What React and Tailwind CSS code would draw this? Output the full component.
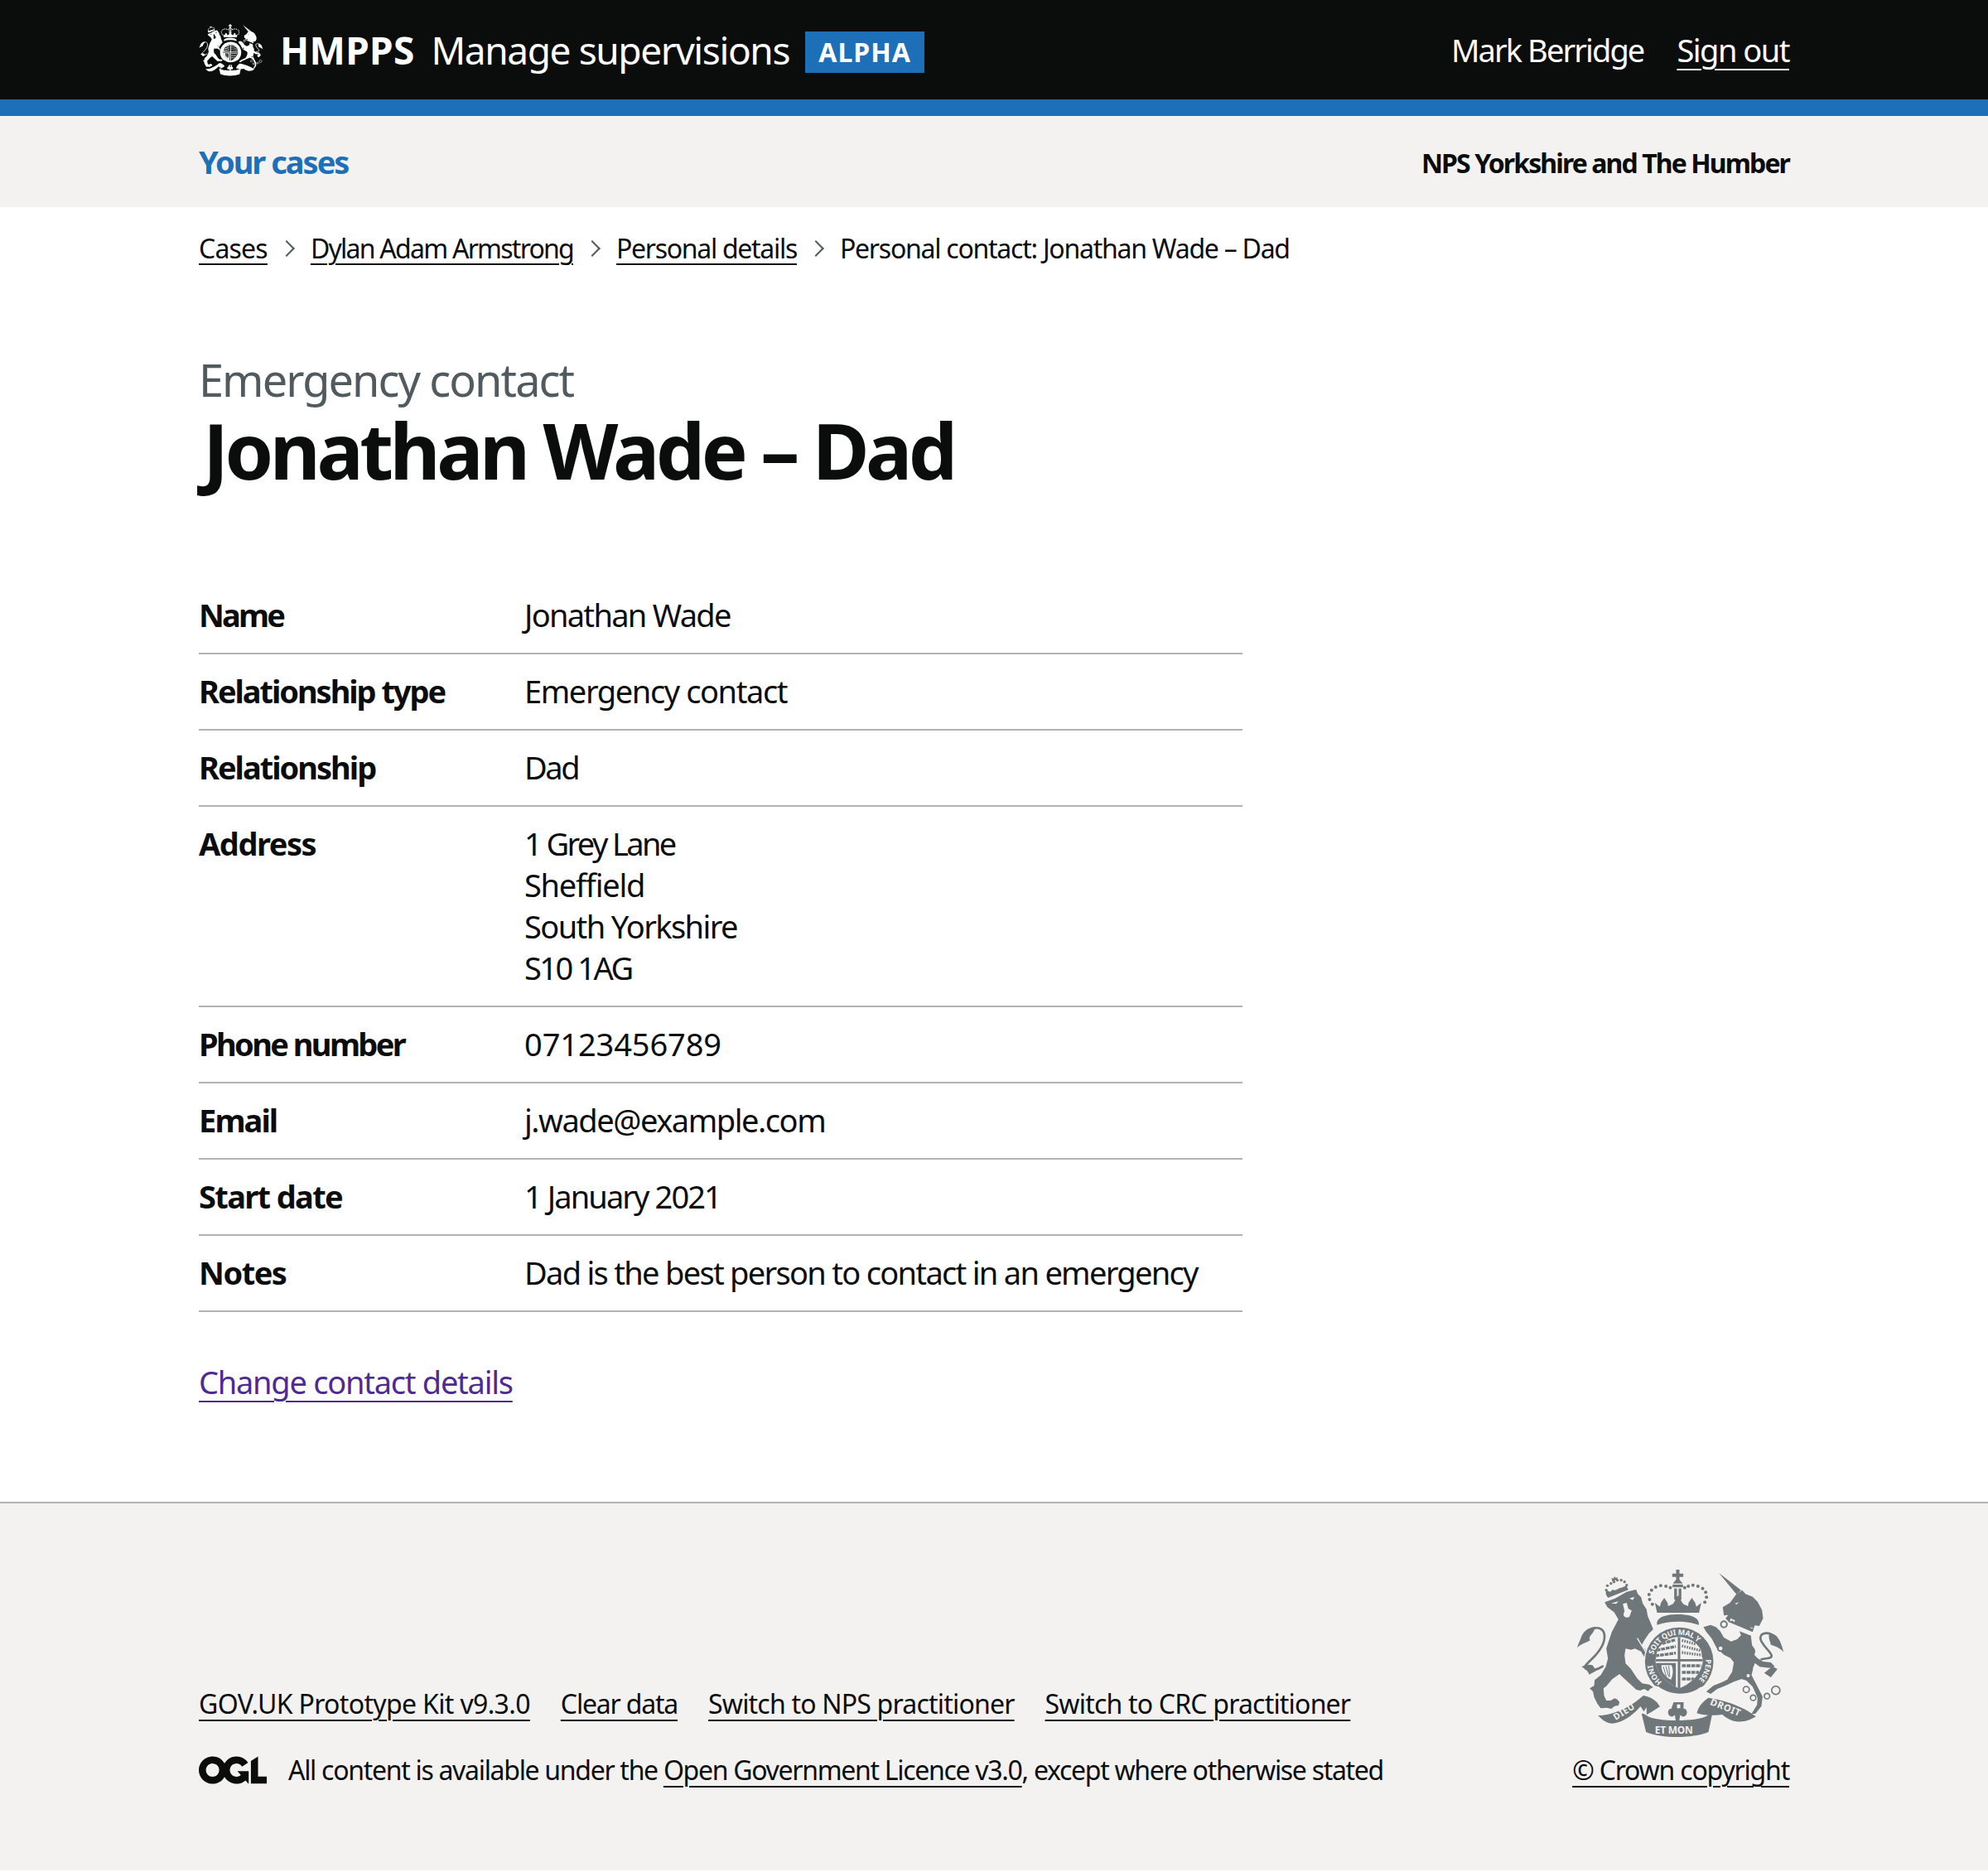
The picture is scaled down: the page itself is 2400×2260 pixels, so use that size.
import React from "react";

const rows = [
  { label: "Name", labelClass: "tracking-[-2.8px]", lines: [["Jonathan Wade", "tracking-[-1.7px]"]] },
  { label: "Relationship type", labelClass: "tracking-[-2.05px]", lines: [["Emergency contact", "tracking-[-1.4px]"]] },
  { label: "Relationship", labelClass: "tracking-[-2px]", lines: [["Dad", "tracking-[-2.4px]"]] },
  {
    label: "Address",
    labelClass: "tracking-[-1.45px]",
    lines: [
      ["1 Grey Lane", "tracking-[-2.6px]"],
      ["Sheffield", "tracking-[-1.25px]"],
      ["South Yorkshire", "tracking-[-1.6px]"],
      ["S10 1AG", "tracking-[-2.5px]"],
    ],
  },
  { label: "Phone number", labelClass: "tracking-[-2.6px]", lines: [["07123456789", "tracking-[-0.1px]"]] },
  { label: "Email", labelClass: "tracking-[-1.9px]", lines: [["j.wade@example.com", "tracking-[-1.45px]"]] },
  { label: "Start date", labelClass: "tracking-[-1.65px]", lines: [["1 January 2021", "tracking-[-1.9px]"]] },
  { label: "Notes", labelClass: "tracking-[-1.5px]", lines: [["Dad is the best person to contact in an emergency", "tracking-[-1.7px]"]] },
];

const dots = [
  [345, 175], [335, 158], [333, 140], [342, 124], [357, 113], [375, 108], [394, 110], [410, 115],
  [541, 150], [538, 132], [527, 118], [510, 110], [492, 106], [475, 110], [462, 115], [535, 168],
];
const lionDots = [[178, 124], [182, 108], [195, 100], [206, 94], [218, 88], [232, 88], [244, 94], [252, 106], [252, 120]];

// royal arms, coordinates taken from the footer crop
const Crest = ({ fg, bg, width, height, label, id }) => (
  <svg viewBox="70 50 755 612" width={width} height={height} className="block shrink-0">
    {/* crown */}
    <path fill={fg} d="M431 50h12v14h14v12h-14v10l12 14h-36l12-14V76h-14V64h14z" />
    <path fill={fg} d="M424 118h10v40h-10zM440 118h10v40h-10zM418 104h38v10h-38z" />
    {dots.map(([x, y]) => <circle key={x + "-" + y} cx={x} cy={y} r="6" fill={fg} />)}
    <path fill={fg} d="M362 206l-8-36 18 14 4-14 12-18 12 18 2 12 18-8 8-14-2-6 12-10 12 10-2 6 8 14 18 8 2-12 12-18 12 18 4 14 18-14-8 36z" />
    <path fill={fg} d="M362 250c-4-28 30-38 75-38s80 10 76 38c-44-16-107-16-151 0z" />
    {/* lion crown */}
    <path fill={fg} d="M176 134l2-10 14 6 10-8 12 6 12-12 10 6 14-10 4 12-70 28z" />
    <path fill={fg} d="M176 138l76-30 2 8-72 32z" />
    {lionDots.map(([x, y]) => <circle key={x + "_" + y} cx={x} cy={y} r="5" fill={fg} />)}
    <path fill={fg} d="M199 92l-2-12 8 2 2-8 6 6 6-4-2 10z" />
    {/* lion */}
    <path fill={fg} d="M172 168l38-14 42-24 34-8 6 16 12 12 6 22 14 22 4 24 12 28 8 20-16 16-16 24-10 18 24 28 16 6 4 26-8 24-16-12-6-22-16-28-22-10-14 4-20-4-4 24 4 30 18 18 24 36 18 18 26 4 14 10-12 6-6 8-14-8-16 6-14-4-24-22-28-26-8-8-26 18-22 26-10 8 2 26 8 18 16 0 14-8 10 4 8 10-4 12-14 2-12 10-16-4-22 2-12-16-12-24-4-20-12-12 16-10 2-20 22-18 18-30 8-30-6-36 20-60 24-46-16-26-24-18z" />
    <path fill="none" stroke={fg} strokeWidth="8" strokeLinecap="round" d="M165 400c-22 16-50 18-62 8-8-10 12-22 34-46 22-24 38-52 34-78-4-22-30-30-44-16" />
    <path fill={fg} d="M140 256c-22 2-40 12-50 32l-18 44c14-12 34-18 48-26-6-6-2-16 8-26 6-8 8-16 12-24zM88 402c14-8 28-10 40-6l14 20-26 14c-4-14-16-22-28-28z" />
    <path fill={bg} d="M238 174l14-4 6 22 12 6-8 22c-8 6-20 4-22-8l4-12zM196 172l26-8-8 10zM262 154l18-6-6 12z" />
    <path fill="none" stroke={bg} strokeWidth="4" d="M290 298l44 72" />
    {/* unicorn */}
    <path fill={fg} d="M586 62l80 62-16 16z" />
    <path fill={fg} d="M600 186L626 170 648 140 670 124 682 138 708 148 726 166 742 196 746 226 732 254 716 252 702 292 706 324 716 338 722 368 744 382 774 386 788 400 772 406 734 402 716 388 710 408 704 432 724 470 744 510 740 544 718 572 704 572 724 540 726 514 708 474 686 452 668 446 640 456 610 470 580 482 556 500 540 492 566 470 596 458 616 448 634 420 640 386 628 370 604 358 578 334 560 300 540 275 530 258 556 250 575 258 590 272 604 296 630 310 652 302 666 288 652 250 646 234 638 232 624 242 610 226 620 214 604 216z" />
    <path fill={bg} d="M628 226l96 42-10 26-92-36z" />
    <path fill={fg} d="M634 234l8 6 4-10 10 8 6-8 8 14 8-6 8 14 8-6 8 16 10 2-4 12-86-36z" />
    <circle cx="724" cy="356" r="9" fill={bg} />
    <circle cx="718" cy="406" r="8" fill={bg} />
    <circle cx="692" cy="434" r="6" fill={bg} />
    <path fill={bg} d="M644 172l14-4-8 8z" />
    <circle cx="604" cy="248" r="11" fill={bg} stroke={fg} strokeWidth="6" />
    <circle cx="592" cy="335" r="10" fill={bg} stroke={fg} strokeWidth="6" />
    <path fill="none" stroke={fg} strokeWidth="8" strokeLinecap="round" d="M740 375c14-6 40 0 36-16-6-16-40-40-40-62 2-22 34-22 48-6" />
    <path fill={fg} d="M768 282c22-4 40 14 52 66-14-16-32-22-46-26-2-12-10-24-6-40zM750 424l30-24 18 10-24 30z" />
    <circle cx="685" cy="484" r="11" fill="none" stroke={fg} strokeWidth="5" />
    <circle cx="710" cy="514" r="10" fill={bg} stroke={fg} strokeWidth="5" />
    <circle cx="760" cy="508" r="10" fill="none" stroke={fg} strokeWidth="5" />
    <circle cx="792" cy="487" r="15" fill="none" stroke={fg} strokeWidth="5" />
    {/* garter and shield */}
    <clipPath id={id + "-sh"}>
      <path d="M363 341A90 90 0 0 1 521 341L528 380C524 425 490 460 442 480 394 460 360 425 356 380z" />
    </clipPath>
    <circle cx="442" cy="383" r="128" fill={bg} />
    <circle cx="442" cy="383" r="124" fill={fg} />
    <path fill={bg} d="M363 341A90 90 0 0 1 521 341L528 380C524 425 490 460 442 480 394 460 360 425 356 380z" />
    <g clipPath={`url(#${id}-sh)`}>
      <path fill={fg} d="M437 280h9v204h-9zM348 374h190v8H348z" />
      <g fill="none" stroke={fg} strokeWidth="10">
        <path d="M364 322l66-18M360 342l70-14M356 362l74-10" strokeDasharray="14 3" />
        <path d="M452 306l50 14M452 326l70 18M452 350l76 10" strokeDasharray="5 4" />
        <path d="M452 398h70M452 422h62M452 446h44" strokeDasharray="14 3" />
      </g>
      <path fill={fg} d="M350 388h80v92h-80zM378 396c-2 22 12 42 34 52 8-16 10-36 2-52z" fillRule="evenodd" />
      <path fill="none" stroke={fg} strokeWidth="3" d="M385 402l10 34M394 400l10 38M404 398l4 40" />
    </g>
    <path fill={bg} d="M352 470l16 4c40 32 110 34 150 2l14-4c-4 8-8 14-14 18-44 32-110 32-150 2-8-6-14-14-16-22z" />
    <circle cx="410" cy="512" r="8" fill={bg} />
    <circle cx="448" cy="514" r="8" fill={bg} />
    {label && (
      <>
        <path id={id + "-top"} d="M349 358A96 96 0 0 1 535 358" fill="none" />
        <path id={id + "-mid"} d="M538 375A96 96 0 0 1 483 470" fill="none" />
        <path id={id + "-low"} d="M380 457A96 96 0 0 1 346 375" fill="none" />
        <g fontFamily="'Noto Sans', sans-serif" fontWeight="700" fontSize="27" fill={bg}>
          <text><textPath href={"#" + id + "-top"}>SOIT QUI MAL Y</textPath></text>
          <text><textPath href={"#" + id + "-mid"}>PENSE</textPath></text>
          <text><textPath href={"#" + id + "-low"}>HONI</textPath></text>
        </g>
      </>
    )}
    {/* motto ribbon */}
    <path fill={fg} d="M148 578C195 580 265 550 312 506 340 510 362 526 372 546 350 560 336 570 322 576L302 545C265 590 215 612 190 606 172 602 160 590 148 578z" />
    <path fill={fg} d="M306 572c8-2 14 0 18 6 30 24 190 24 220 0 4-6 10-8 18-6l-14 66c-58 24-168 24-226 0z" />
    <path fill={bg} d="M324 578l-14-8 14-22zM544 578l14-8-14-22z" />
    <path fill={fg} d="M506 570c4-20 18-40 42-56 44 6 124 28 172 68-34 22-82 30-122-8-18 4-60 6-92-4z" />
    <path fill={fg} d="M422 530h36v22l-10 6c6-8 24-6 22 12-2 14-18 16-24 6l-6 34h-8l-6-34c-6 10-22 8-24-6-2-18 16-20 22-12l-10-6z" />
    <path fill={bg} d="M434 538h12v14h-12z" />
    {label && (
      <g fontFamily="'Noto Sans', sans-serif" fontWeight="700" fill={bg}>
        <text x="212" y="596" fontSize="32" transform="rotate(-32 212 596)" letterSpacing="2">DIEU</text>
        <text x="354" y="645" fontSize="36">ET MON</text>
        <text x="552" y="538" fontSize="34" transform="rotate(22 552 538)" letterSpacing="2">DROIT</text>
      </g>
    )}
  </svg>
);

const Chevron = () => (
  <span className="mx-[19px] block h-[14px] w-[14px] shrink-0 -translate-x-[3px] rotate-45 border-t-2 border-r-2 border-[#505a5f]" />
);

const CrumbLink = ({ className, children }) => (
  <a className={"underline decoration-2 underline-offset-[6px] " + className}>{children}</a>
);

const FooterLink = ({ className = "", children }) => (
  <a className={"underline decoration-2 underline-offset-[7px] " + className}>{children}</a>
);

export default function App() {
  return (
    <div className="min-h-[2260px] bg-white font-['Noto_Sans',sans-serif] text-[#0b0c0c]">
      <header className="h-[140px] border-b-[20px] border-[#1d70b8] bg-[#0b0c0c] text-white">
        <div className="mx-auto flex h-full w-[1920px] items-center justify-between">
          <div className="flex items-center">
            <Crest fg="#ffffff" bg="#0b0c0c" width={78} height={63} id="head" />
            <span className="ml-[20px] text-[46px] font-bold leading-none tracking-[0.3px]">HMPPS</span>
            <span className="ml-[20px] text-[46px] leading-none tracking-[-1.4px]">Manage supervisions</span>
            <span className="ml-[19px] mt-[6px] flex h-[50px] w-[144px] items-center justify-center bg-[#1d70b8] text-[32px] font-bold tracking-[1px]">ALPHA</span>
          </div>
          <div className="flex items-center gap-[40px] text-[38px]">
            <span className="tracking-[-1.9px]">Mark Berridge</span>
            <a className="underline decoration-2 underline-offset-[8px] tracking-[-1.5px]">Sign out</a>
          </div>
        </div>
      </header>

      <nav className="h-[110px] bg-[#f3f2f1]">
        <div className="mx-auto flex h-full w-[1920px] items-center justify-between">
          <a className="text-[38px] font-bold tracking-[-2px] text-[#1d70b8]">Your cases</a>
          <span className="pt-[3px] text-[32px] font-bold tracking-[-1.9px]">NPS Yorkshire and The Humber</span>
        </div>
      </nav>

      <main className="mx-auto w-[1920px]">
        <div className="flex h-[80px] items-center pt-[20px] text-[32px] tracking-[-1.25px]">
          <CrumbLink className="tracking-[-0.8px]">Cases</CrumbLink>
          <Chevron />
          <CrumbLink className="tracking-[-1.75px]">Dylan Adam Armstrong</CrumbLink>
          <Chevron />
          <CrumbLink className="tracking-[-1.3px]">Personal details</CrumbLink>
          <Chevron />
          <span>Personal contact: Jonathan Wade – Dad</span>
        </div>

        <div className="pt-[98px]">
          <div className="text-[54px] leading-[60px] tracking-[-1.9px] text-[#505a5f]">Emergency contact</div>
          <h1 className="ml-[5px] mt-[5px] text-[94px] font-bold leading-[100px] tracking-[-4.5px]">Jonathan Wade – Dad</h1>
        </div>

        <dl className="mt-[105px] w-[1260px] text-[38px] leading-[50px]">
          {rows.map((row) => (
            <div key={row.label} className="flex border-b-2 border-[#b1b4b6] pt-[19px] pb-[21px]">
              <dt className={"w-[393px] shrink-0 font-bold " + row.labelClass}>{row.label}</dt>
              <dd>
                {row.lines.map(([text, track]) => <div key={text} className={track}>{text}</div>)}
              </dd>
            </div>
          ))}
        </dl>

        <a className="mt-[59px] mb-[1px] block w-fit text-[38px] leading-[50px] tracking-[-1.25px] text-[#4c2c92] underline decoration-2 underline-offset-[8px]">Change contact details</a>
      </main>

      <footer className="mt-[120px] h-[445px] border-t-2 border-[#b1b4b6] bg-[#f3f2f1]">
        <div className="mx-auto flex w-[1920px] items-end justify-between pt-[80px] text-[32px] tracking-[-0.8px]">
          <div className="pb-[2px]">
            <div className="flex gap-[37px] leading-[40px]">
              <FooterLink className="tracking-[-0.65px]">GOV.UK Prototype Kit v9.3.0</FooterLink>
              <FooterLink className="tracking-[-1.2px]">Clear data</FooterLink>
              <FooterLink>Switch to NPS practitioner</FooterLink>
              <FooterLink>Switch to CRC practitioner</FooterLink>
            </div>
            <div className="mt-[40px] flex items-center leading-[40px] tracking-[-1.3px]">
              <svg viewBox="0 0 483.2 195.7" width="82" height="34" className="mr-[26px] shrink-0">
                <path fill="currentColor" d="M421.5 142.8V.1l-50.7 32.3v161.1h112.4v-50.7zm-122.3-9.6A47.12 47.12 0 0 1 221 97.8c0-26 21.1-47.1 47.1-47.1 16.7 0 31.4 8.7 39.7 21.8l42.7-27.2A97.63 97.63 0 0 0 268.1 0c-36.5 0-68.3 20.1-85.1 49.7A98 98 0 0 0 97.8 0C43.9 0 0 43.9 0 97.8s43.9 97.8 97.8 97.8c36.5 0 68.3-20.1 85.1-49.7a97.76 97.76 0 0 0 149.6 25.4l19.4 22.2h3v-87.8h-80l24.3 27.5zM97.8 145c-26 0-47.1-21.1-47.1-47.1s21.1-47.1 47.1-47.1 47.2 21 47.2 47S123.8 145 97.8 145" />
              </svg>
              <span>
                All content is available under the <FooterLink>Open Government Licence v3.0</FooterLink>, except where otherwise stated
              </span>
            </div>
          </div>
          <div className="flex flex-col items-center">
            <Crest fg="#6f777b" bg="#f3f2f1" width={252} height={204} label id="foot" />
            <div className="mt-[18px] leading-[40px] pb-[2px] tracking-[-1.2px]">
              <FooterLink>© Crown copyright</FooterLink>
            </div>
          </div>
        </div>
      </footer>
    </div>
  );
}
